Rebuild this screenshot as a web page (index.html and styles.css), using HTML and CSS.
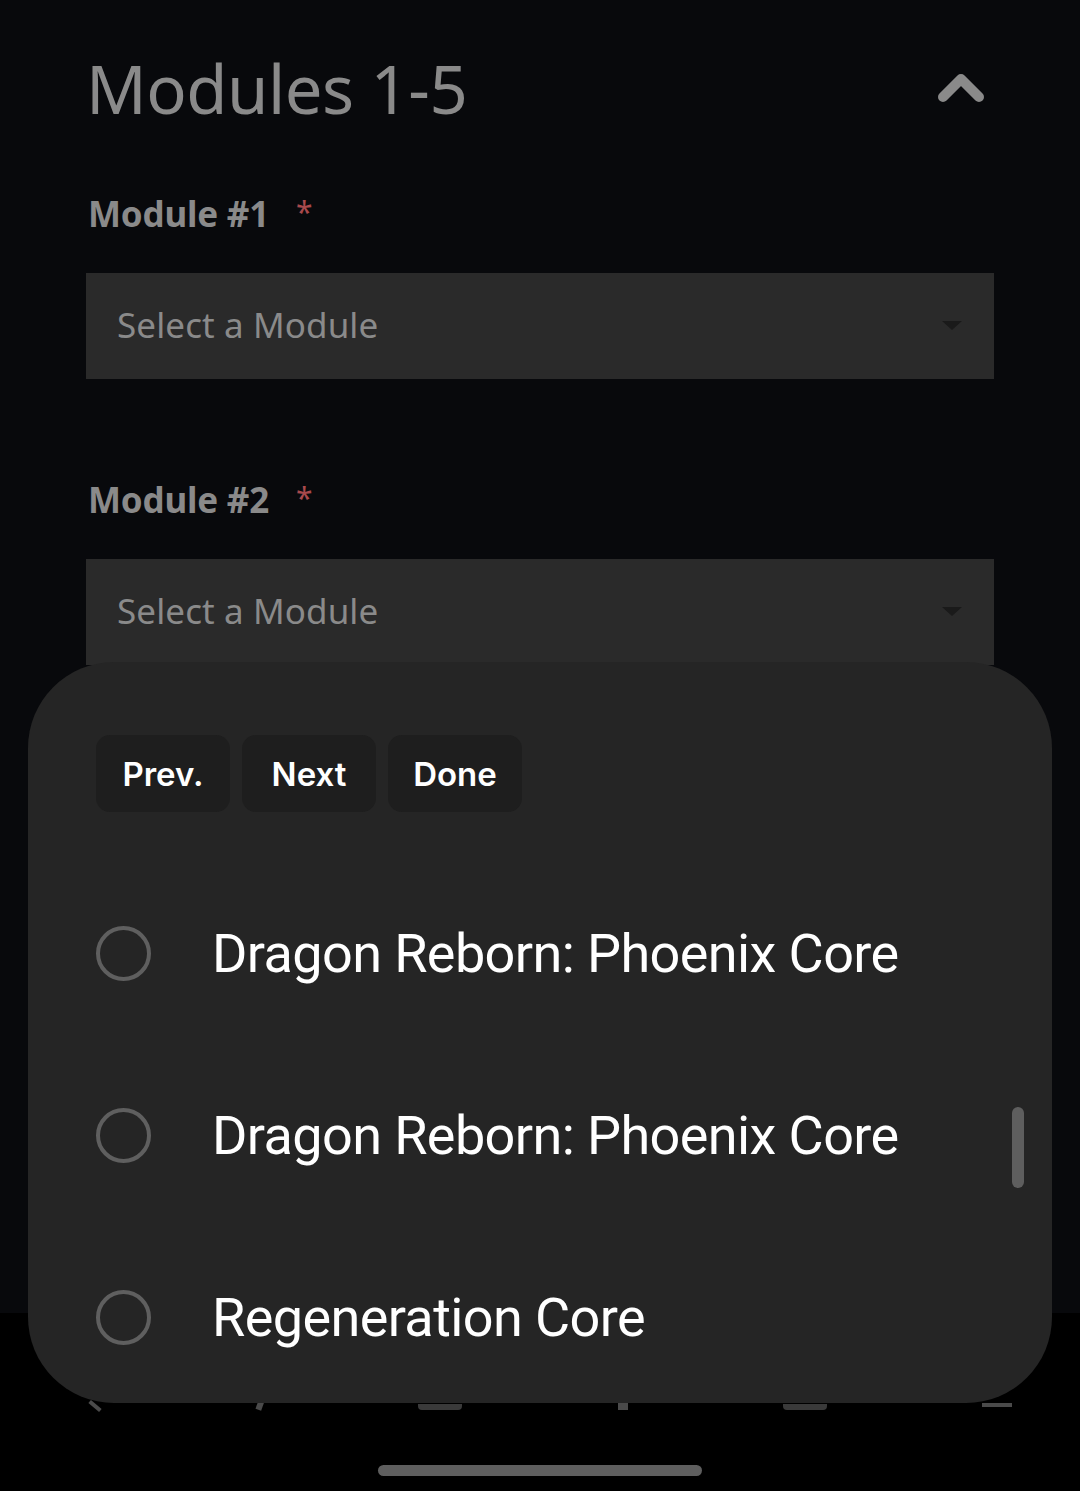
FILE: index.html
```html
<!DOCTYPE html>
<html>
<head>
    <meta charset="UTF-8">
    <title>Modules</title>
    <link rel="stylesheet" href="styles.css">
</head>
<body>
    <div class="screen">
        <main class="page">
            <div class="section-head">
                <h1>Modules 1-5</h1>
                <svg class="chevron" width="46" height="30" viewBox="0 0 46 30">
                    <path d="M5 25 L23 7 L41 25" fill="none" stroke="#8a8a8a" stroke-width="10" stroke-linecap="round" stroke-linejoin="round"/>
                </svg>
            </div>

            <div class="field">
                <label class="field-label">Module #1 <span class="req">*</span></label>
                <div class="select">
                    <span>Select a Module</span>
                    <span class="caret"></span>
                </div>
            </div>

            <div class="field">
                <label class="field-label">Module #2 <span class="req">*</span></label>
                <div class="select">
                    <span>Select a Module</span>
                    <span class="caret"></span>
                </div>
            </div>
        </main>

        <nav class="navbar">
            <div class="nav-icons">
                <span class="ni ni-back"></span>
                <span class="ni ni-line"></span>
                <span class="ni ni-box"></span>
                <span class="ni ni-mid"></span>
                <span class="ni ni-box"></span>
                <span class="ni ni-menu"></span>
            </div>
            <div class="home-bar"></div>
        </nav>

        <!-- picker sheet over the form -->
        <div class="sheet">
            <div class="toolbar">
                <button class="tb-btn">Prev.</button>
                <button class="tb-btn">Next</button>
                <button class="tb-btn">Done</button>
            </div>
            <ul class="options">
                <li class="option"><span class="radio"></span>Dragon Reborn: Phoenix Core</li>
                <li class="option"><span class="radio"></span>Dragon Reborn: Phoenix Core</li>
                <li class="option"><span class="radio"></span>Regeneration Core</li>
            </ul>
            <div class="scrollbar"></div>
        </div>
    </div>
</body>
</html>
```

FILE: styles.css
```css
body {
    margin: 0;
    padding: 0;
    background-color: #000;
    font-family: 'Noto Sans', sans-serif;
}
.screen {
    position: relative;
    width: 1080px;
    height: 1491px;
    overflow: hidden;
}
.page {
    height: 1313px;
    background-color: #08090c;
    padding: 0 86px 0 86px;
    box-sizing: border-box;
}
.section-head {
    display: flex;
    align-items: center;
    justify-content: space-between;
    height: 180px;
    padding-right: 10px;
}
h1 {
    margin: 0;
    margin-top: -4px;
    font-size: 67px;
    font-weight: 400;
    color: #8a8a8a;
    letter-spacing: -0.5px;
}
.chevron {
    margin-top: -6px;
}
.field {
    margin-bottom: 87px;
}
.field-label {
    display: block;
    height: 93px;
    padding-left: 2px;
    font-size: 35px;
    font-weight: 700;
    color: #8a8a8a;
    letter-spacing: -0.2px;
    line-height: 64px;
}
.req {
    margin-left: 18px;
    font-weight: 400;
    color: #a8494c;
    vertical-align: 4px;
    font-size: 30px;
}
.select {
    display: flex;
    align-items: center;
    justify-content: space-between;
    height: 106px;
    padding: 0 32px 4px 31px;
    box-sizing: border-box;
    background-color: #2a2a2a;
    font-size: 35px;
    color: #8a8a8a;
    letter-spacing: 0.1px;
}
.caret {
    width: 0;
    height: 0;
    margin-top: 2px;
    border-left: 10px solid transparent;
    border-right: 10px solid transparent;
    border-top: 9px solid #1a1a1a;
}
.navbar {
    position: relative;
    height: 178px;
    background-color: #000;
}
.nav-icons {
    display: flex;
    justify-content: space-between;
    align-items: flex-end;
    height: 97px;
    padding: 0 68px 0 88px;
}
.ni {
    display: block;
    background-color: #4a4a4a;
}
.ni-back {
    width: 14px;
    height: 4px;
    transform: rotate(40deg);
    margin-bottom: 2px;
}
.ni-line {
    width: 6px;
    height: 10px;
    transform: rotate(20deg);
}
.ni-box {
    width: 44px;
    height: 6px;
    border-radius: 0 0 4px 4px;
    background-color: #3a3a3a;
}
.ni-mid {
    width: 10px;
    height: 10px;
}
.ni-menu {
    width: 30px;
    height: 4px;
    margin-bottom: 3px;
}
.home-bar {
    position: absolute;
    left: 378px;
    top: 152px;
    width: 324px;
    height: 11px;
    border-radius: 6px;
    background-color: #5e5e5e;
}
.sheet {
    position: absolute;
    left: 28px;
    top: 662px;
    width: 1024px;
    height: 741px;
    border-radius: 86px;
    background-color: #252525;
    box-sizing: border-box;
    padding: 73px 68px 0 68px;
    font-family: Roboto, sans-serif;
}
.toolbar {
    display: flex;
    gap: 12px;
}
.tb-btn {
    width: 134px;
    height: 77px;
    border: none;
    border-radius: 14px;
    background-color: #1e1e1e;
    color: #fff;
    font-family: Inter, sans-serif;
    font-size: 33px;
    font-weight: 600;
    letter-spacing: 0;
    padding: 0;
}
.options {
    list-style: none;
    margin: 50px 0 0 0;
    padding: 0;
}
.option {
    display: flex;
    align-items: center;
    height: 182px;
    font-size: 54px;
    color: #fff;
    letter-spacing: -0.6px;
}
.radio {
    width: 47px;
    height: 47px;
    border: 4px solid #5f5f5f;
    border-radius: 50%;
    margin-right: 61px;
    flex-shrink: 0;
}
.scrollbar {
    position: absolute;
    left: 984px;
    top: 445px;
    width: 12px;
    height: 81px;
    border-radius: 6px;
    background-color: #5e5e5e;
}
```
